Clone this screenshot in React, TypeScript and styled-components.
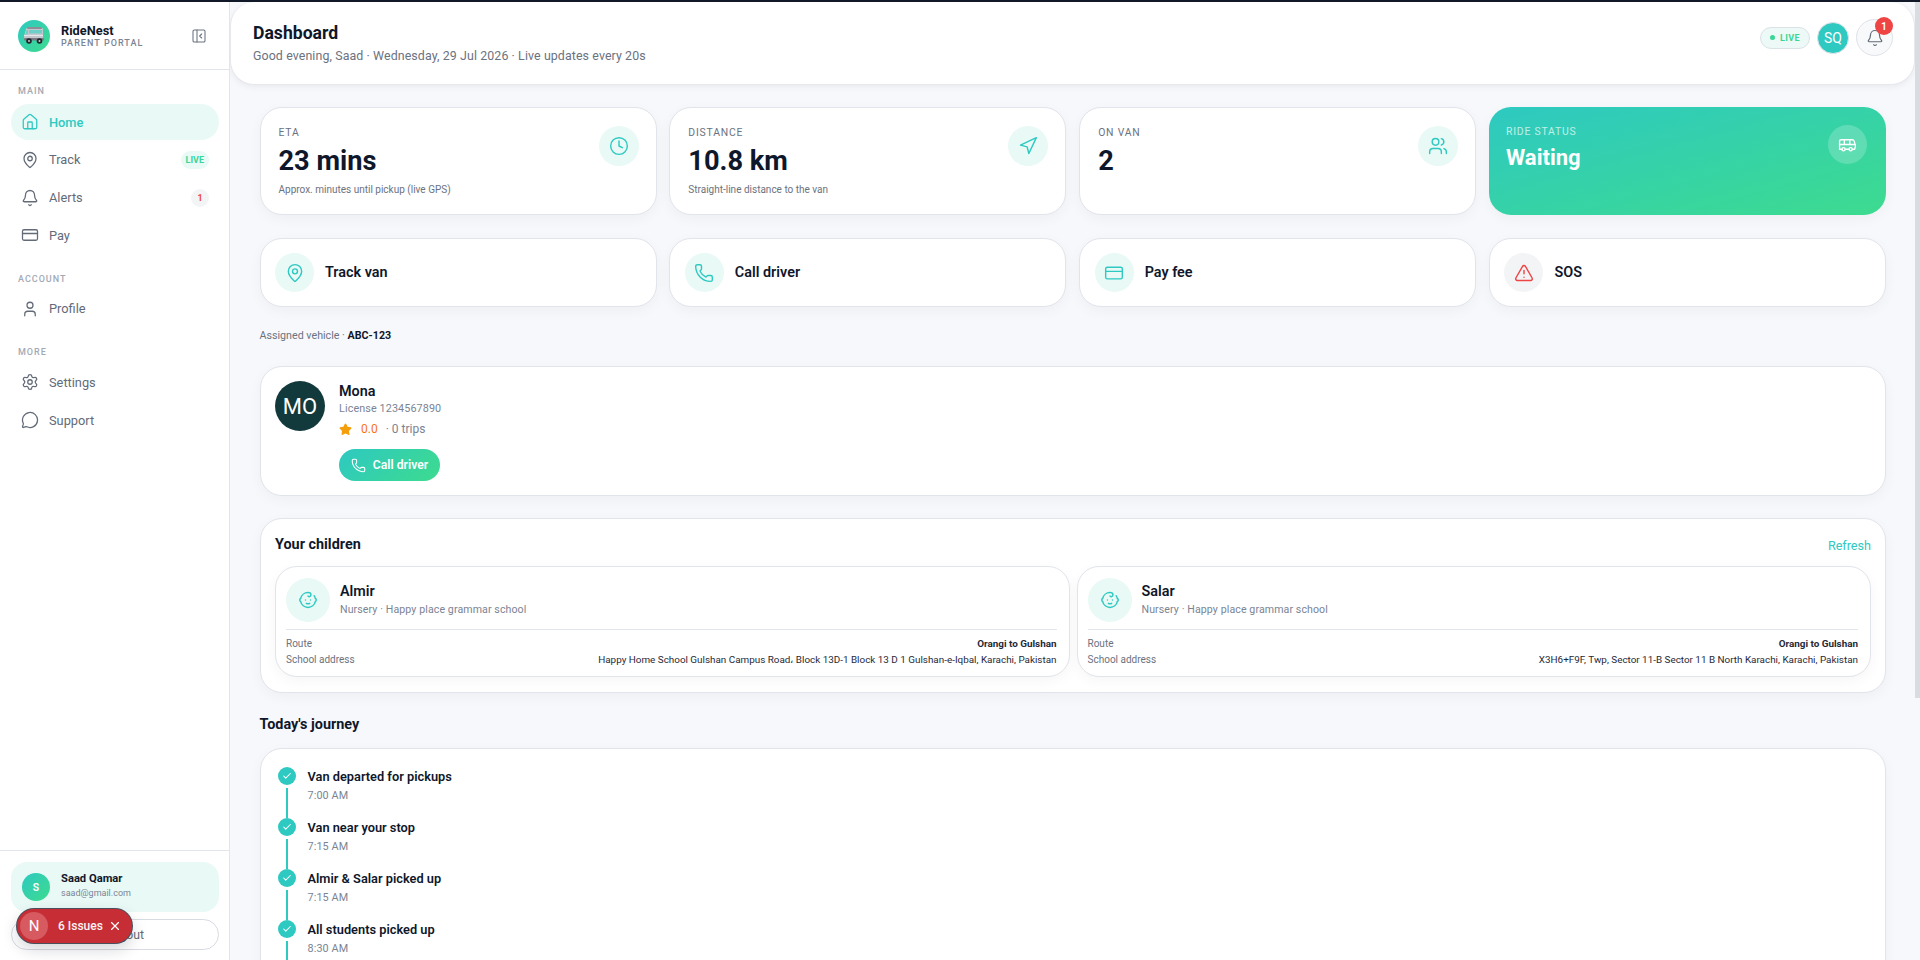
import React from 'react';
import styled, { createGlobalStyle } from 'styled-components';
import {
  House, MapPin, Bell, CreditCard, User, Settings, MessageCircle, PanelLeftClose,
  Clock, Navigation, Users, Bus, Phone, TriangleAlert, Baby, Check, Star, X, LogOut,
} from 'lucide-react';

const GlobalStyle = createGlobalStyle`
  html, body { margin: 0; padding: 0; height: 100%; overflow: hidden; }
  body { font-family: Roboto, "Liberation Sans", sans-serif; color: #0f172a; background: #f7f8fb; }
  * { box-sizing: border-box; }
`;

const teal = '#2ec9c1';
const gradient = 'linear-gradient(135deg, #2ec9c1 0%, #3ddb8f 100%)';

const Page = styled.div`
  height: 960px;
  display: flex;
  flex-direction: column;
  overflow: hidden;
  position: relative;
`;
const TopLine = styled.div`
  height: 2px;
  flex: none;
  background: #111827;
`;
const Body = styled.div`
  flex: 1;
  min-height: 0;
  display: flex;
`;

/* sidebar */
const Sidebar = styled.aside`
  width: 230px;
  flex: none;
  background: #fff;
  border-right: 1px solid #e2e5ea;
  display: flex;
  flex-direction: column;
`;
const Brand = styled.div`
  height: 68px;
  flex: none;
  display: flex;
  align-items: center;
  padding: 0 22px 0 18px;
  border-bottom: 1px solid #e2e5ea;
`;
const LogoCircle = styled.div`
  width: 32px;
  height: 32px;
  border-radius: 50%;
  background: ${gradient};
  display: flex;
  align-items: center;
  justify-content: center;
  flex: none;
`;
const BrandText = styled.div`
  margin-left: 11px;
  flex: 1;
`;
const BrandName = styled.div`
  font-size: 12.8px;
  line-height: 15px;
  font-weight: 700;
  color: #0f172a;
`;
const BrandSub = styled.div`
  font-size: 9px;
  line-height: 11px;
  font-weight: 500;
  letter-spacing: 1.05px;
  color: #7b8494;
`;
const Toggle = styled.div`
  color: #6b7280;
  display: flex;
`;
const Nav = styled.nav`
  flex: 1;
  padding: 15px 10px 0 11px;
`;
const NavLabel = styled.div`
  font-size: 9px;
  line-height: 12px;
  font-weight: 500;
  letter-spacing: 1px;
  color: #a3a9b4;
  padding-left: 7px;
  margin-bottom: 7px;
  &:not(:first-child) { margin: 19.5px 0 6px; }
`;
const NavItem = styled.div<{ $active?: boolean }>`
  height: 36px;
  margin-bottom: 1.8px;
  border-radius: 18px;
  display: flex;
  align-items: center;
  padding: 0 10px;
  gap: 10px;
  font-size: 12.8px;
  font-weight: ${(p) => (p.$active ? 500 : 400)};
  color: ${(p) => (p.$active ? teal : '#636b78')};
  background: ${(p) => (p.$active ? '#e9f9f6' : 'transparent')};
`;
const NavText = styled.span`
  flex: 1;
`;
const LiveTag = styled.span`
  font-size: 9px;
  line-height: 18px;
  font-weight: 700;
  color: #3ad695;
  background: #e9f9f6;
  border-radius: 9px;
  padding: 0 5px;
`;
const CountTag = styled.span`
  width: 18px;
  height: 18px;
  border-radius: 50%;
  background: #f3f4f6;
  color: #ef4444;
  font-size: 9px;
  font-weight: 700;
  display: flex;
  align-items: center;
  justify-content: center;
`;
const SideFooter = styled.div`
  flex: none;
  height: 110px;
  border-top: 1px solid #e2e5ea;
  padding: 11px 10px 0 11px;
`;
const UserCard = styled.div`
  height: 50px;
  border-radius: 16px;
  background: #e9f9f6;
  display: flex;
  align-items: center;
  padding: 0 11px;
  gap: 11px;
`;
const UserAvatar = styled.div`
  width: 28px;
  height: 28px;
  border-radius: 50%;
  background: ${gradient};
  color: #fff;
  font-size: 10.4px;
  font-weight: 600;
  display: flex;
  align-items: center;
  justify-content: center;
`;
const UserName = styled.div`
  font-size: 11.2px;
  line-height: 14px;
  font-weight: 700;
  margin-top: -2px;
`;
const UserMail = styled.div`
  font-size: 9px;
  line-height: 15px;
  color: #7b8494;
`;
const LogoutButton = styled.div`
  height: 31px;
  margin-top: 7px;
  border: 1px solid #d8dbe1;
  border-radius: 16px;
  background: #fff;
  display: flex;
  align-items: center;
  justify-content: center;
  gap: 6px;
  font-size: 12.2px;
  color: #636b78;
`;
const IssuesBadge = styled.div`
  position: absolute;
  left: 17px;
  top: 909px;
  width: 115px;
  height: 34px;
  border-radius: 17px;
  background: #c62d34;
  box-shadow: 0 0 0 1px #4a4f5c, 0 6px 16px rgba(15, 23, 42, 0.18);
  display: flex;
  align-items: center;
  color: #fff;
  padding-left: 3px;
  font-size: 12px;
  font-weight: 500;
`;
const IssuesLogo = styled.div`
  width: 28px;
  height: 28px;
  border-radius: 50%;
  background: #d65a60;
  display: flex;
  align-items: center;
  justify-content: center;
  font-size: 15px;
  font-weight: 400;
  margin-right: 10px;
`;
const IssuesText = styled.span`
  margin-right: 5px;
  opacity: 0.95;
`;

/* main column */
const Main = styled.main`
  flex: 1;
  min-width: 0;
  overflow: hidden;
`;
const Header = styled.header`
  height: 83px;
  background: #fff;
  border-radius: 24px;
  border: 1px solid #e6e8ed;
  border-top: none;
  box-shadow: 0 2px 6px rgba(15, 23, 42, 0.06);
  display: flex;
  align-items: center;
  justify-content: space-between;
  padding: 0 21px 2px 22px;
`;
const PageTitle = styled.h1`
  margin: 0;
  font-size: 17.6px;
  line-height: 24px;
  font-weight: 700;
`;
const PageSub = styled.p`
  margin: 3px 0 0;
  font-size: 12.4px;
  line-height: 16px;
  color: #6b7280;
  letter-spacing: 0.1px;
`;
const HeaderActions = styled.div`
  display: flex;
  align-items: center;
  gap: 7px;
  margin-bottom: 9px;
`;
const LivePill = styled.div`
  width: 50px;
  height: 22px;
  border-radius: 11px;
  border: 1px solid #dbe2e6;
  background: #ecf9f6;
  color: #3ad695;
  font-size: 9px;
  font-weight: 700;
  letter-spacing: 0.4px;
  display: flex;
  align-items: center;
  justify-content: center;
  gap: 5px;
`;
const LiveDot = styled.span`
  width: 5px;
  height: 5px;
  border-radius: 50%;
  background: #3ad695;
`;
const HeaderAvatar = styled.div`
  width: 32px;
  height: 32px;
  border-radius: 50%;
  background: ${teal};
  border: 1px solid #dfe3e8;
  color: #fff;
  font-size: 14px;
  font-weight: 400;
  display: flex;
  align-items: center;
  justify-content: center;
`;
const BellButton = styled.div`
  width: 37px;
  height: 37px;
  border-radius: 50%;
  border: 1px solid #dfe2e7;
  background: #f8f9fb;
  color: #636b78;
  display: flex;
  align-items: center;
  justify-content: center;
  position: relative;
`;
const BellBadge = styled.span`
  position: absolute;
  top: -3px;
  right: -1px;
  width: 18px;
  height: 18px;
  border-radius: 50%;
  background: #ef4444;
  color: #fff;
  font-size: 10.4px;
  font-weight: 600;
  display: flex;
  align-items: center;
  justify-content: center;
`;
const Content = styled.div`
  padding: 22px 29px 0 29.5px;
  display: flex;
  flex-direction: column;
`;
const FourGrid = styled.div`
  display: grid;
  grid-template-columns: repeat(4, 1fr);
  gap: 12.8px;
`;
const Card = styled.div`
  background: #fff;
  border: 1px solid #e1e4ea;
  border-radius: 22px;
  box-shadow: 0 4px 14px rgba(15, 23, 42, 0.04);
`;
const StatCard = styled(Card)<{ $accent?: boolean }>`
  height: 108px;
  padding: 18px 17px 17px 18px;
  display: flex;
  justify-content: space-between;
  ${(p) => p.$accent && `
    padding: 18px 19px 17px 17px;
    background: linear-gradient(to bottom right, #2ec9c1, #3ddb8f);
    border: none;
    color: #fff;
  `}
`;
const StatLabel = styled.div<{ $accent?: boolean }>`
  font-size: 10.4px;
  line-height: 14px;
  letter-spacing: 0.8px;
  color: ${(p) => (p.$accent ? 'rgba(255,255,255,.7)' : '#6b7280')};
`;
const StatValue = styled.div<{ $small?: boolean }>`
  font-size: ${(p) => (p.$small ? '22px' : '27.2px')};
  line-height: ${(p) => (p.$small ? '28px' : '32px')};
  font-weight: 700;
  margin-top: 5px;
`;
const StatNote = styled.div`
  font-size: 10px;
  line-height: 14px;
  color: #6b7280;
  margin-top: 6px;
`;
const IconCircle = styled.div<{ $size: number; $tone?: 'teal' | 'red' | 'glass' }>`
  width: ${(p) => p.$size}px;
  height: ${(p) => p.$size}px;
  flex: none;
  border-radius: 50%;
  display: flex;
  align-items: center;
  justify-content: center;
  color: ${(p) => (p.$tone === 'red' ? '#ef4444' : p.$tone === 'glass' ? '#fff' : teal)};
  background: ${(p) =>
    p.$tone === 'red' ? '#f3f4f6' : p.$tone === 'glass' ? 'rgba(255,255,255,.2)' : '#e9f9f6'};
`;
const ActionsRow = styled(FourGrid)`
  margin-top: 23px;
`;
const ActionCard = styled(Card)`
  height: 69px;
  display: flex;
  align-items: center;
  gap: 11px;
  padding: 0 14.5px;
  font-size: 14.4px;
  font-weight: 600;
`;
const VehicleLine = styled.div`
  margin-top: 21px;
  font-size: 10.7px;
  line-height: 16px;
  color: #6b7280;
  & b { color: #0f172a; font-weight: 700; }
`;
const DriverCard = styled(Card)`
  margin-top: 22px;
  height: 130px;
  padding: 14px 14.5px;
  display: flex;
  gap: 14px;
`;
const DriverAvatar = styled.div`
  width: 50px;
  height: 50px;
  border-radius: 50%;
  background: #12393b;
  color: #fff;
  font-size: 22px;
  display: flex;
  align-items: center;
  justify-content: center;
`;
const DriverBody = styled.div`
  padding-top: 1px;
`;
const DriverName = styled.div`
  font-size: 14.4px;
  line-height: 20px;
  font-weight: 600;
`;
const DriverMeta = styled.div`
  font-size: 10.8px;
  line-height: 14px;
  color: #7b8494;
  letter-spacing: 0.1px;
`;
const RatingRow = styled.div`
  display: flex;
  align-items: center;
  margin-top: 5px;
  height: 16px;
  font-size: 12px;
  color: #7b8494;
`;
const RatingValue = styled.span`
  color: #f97316;
  margin: 0 8px 0 9px;
`;
const CallButton = styled.div`
  margin-top: 12px;
  width: 101px;
  height: 32px;
  border-radius: 16px;
  background: ${gradient};
  color: #fff;
  font-size: 12.2px;
  font-weight: 600;
  display: flex;
  align-items: center;
  justify-content: center;
  gap: 7px;
`;
const ChildrenCard = styled(Card)`
  margin-top: 22px;
  height: 175px;
  padding: 15px 14px 15px 14.5px;
`;
const SectionHead = styled.div`
  display: flex;
  align-items: center;
  justify-content: space-between;
  height: 20px;
  margin-bottom: 12px;
`;
const SectionTitle = styled.div`
  font-size: 14.4px;
  line-height: 20px;
  font-weight: 700;
  margin-top: 1px;
`;
const RefreshLink = styled.span`
  font-size: 12.6px;
  font-weight: 400;
  color: ${teal};
  margin-top: 2px;
`;
const ChildGrid = styled.div`
  display: grid;
  grid-template-columns: 1fr 1fr;
  gap: 7px;
`;
const ChildCard = styled(Card)`
  height: 111px;
  padding: 9px 12px 0 10px;
`;
const ChildTop = styled.div`
  display: flex;
  align-items: center;
  gap: 10px;
  height: 54px;
  padding-bottom: 5px;
  border-bottom: 1px solid #e2e5ea;
`;
const ChildName = styled.div`
  font-size: 14.4px;
  line-height: 18px;
  font-weight: 600;
`;
const ChildSub = styled.div`
  font-size: 10.6px;
  line-height: 14px;
  color: #7b8494;
  letter-spacing: 0.1px;
  margin-top: 2px;
`;
const InfoList = styled.div`
  padding-top: 5px;
`;
const InfoRow = styled.div`
  display: flex;
  justify-content: space-between;
  height: 16.5px;
  align-items: center;
  font-size: 10px;
  color: #6b7280;
`;
const InfoValue = styled.span<{ $bold?: boolean }>`
  font-size: 9.9px;
  color: #1f2937;
  font-weight: ${(p) => (p.$bold ? 700 : 400)};
`;
const JourneyTitle = styled.div`
  margin-top: 22px;
  font-size: 14.4px;
  line-height: 20px;
  font-weight: 700;
`;
const JourneyCard = styled(Card)`
  margin-top: 13px;
  padding: 18px 17px 0 17.5px;
  height: 260px;
`;
const Step = styled.div`
  display: flex;
  gap: 11.5px;
  height: 51px;
`;
const StepRail = styled.div`
  width: 18px;
  flex: none;
  display: flex;
  flex-direction: column;
  align-items: center;
`;
const StepDot = styled.div`
  width: 18px;
  height: 18px;
  flex: none;
  border-radius: 50%;
  background: ${teal};
  color: #fff;
  display: flex;
  align-items: center;
  justify-content: center;
`;
const StepLine = styled.div`
  width: 2px;
  flex: 1;
  margin-top: 3px;
  background: ${teal};
`;
const StepBody = styled.div`
  padding-top: 1px;
`;
const StepTitle = styled.div`
  font-size: 12.8px;
  line-height: 18px;
  font-weight: 600;
`;
const StepTime = styled.div`
  font-size: 10.8px;
  line-height: 14px;
  color: #7b8494;
  margin-top: 3px;
  letter-spacing: 0.1px;
`;
const ScrollTrack = styled.div`
  width: 5px;
  flex: none;
  background: #f7f8fb;
`;
const ScrollThumb = styled.div`
  height: 696px;
  background: #d9dce1;
`;

const VanLogo = () => (
  <svg width="24" height="19" viewBox="0 0 24 19">
    <path d="M5 2h15a1 1 0 0 1 1 1v11H2v-4l2-7a1 1 0 0 1 1-1z" fill="#c4c7cd" />
    <rect x="5" y="1" width="15" height="2" rx="1" fill="#8b8f97" />
    <rect x="7" y="4" width="13" height="3.5" fill="#6ccfca" />
    <path d="M3.4 8.4 4.6 4H6v4.4z" fill="#6ccfca" />
    <rect x="2" y="9" width="19" height="1" fill="#e6e7ea" />
    <rect x="2" y="12" width="20" height="2.6" rx="1" fill="#777b84" />
    <circle cx="7" cy="15" r="2.8" fill="#23262c" />
    <circle cx="17.5" cy="15" r="2.8" fill="#23262c" />
    <circle cx="7" cy="15" r="1" fill="#c4c7cd" />
    <circle cx="17.5" cy="15" r="1" fill="#c4c7cd" />
  </svg>
);

const stats = [
  { label: 'ETA', value: '23 mins', note: 'Approx. minutes until pickup (live GPS)', icon: Clock },
  { label: 'DISTANCE', value: '10.8 km', note: 'Straight-line distance to the van', icon: Navigation },
  { label: 'ON VAN', value: '2', note: '', icon: Users },
];

const children = [
  { name: 'Almir', address: 'Happy Home School Gulshan Campus Road، Block 13D-1 Block 13 D 1 Gulshan-e-Iqbal, Karachi, Pakistan' },
  { name: 'Salar', address: 'X3H6+F9F, Twp, Sector 11-B Sector 11 B North Karachi, Karachi, Pakistan' },
];

const steps = [
  { title: 'Van departed for pickups', time: '7:00 AM' },
  { title: 'Van near your stop', time: '7:15 AM' },
  { title: 'Almir & Salar picked up', time: '7:15 AM' },
  { title: 'All students picked up', time: '8:30 AM' },
];

export default function App() {
  return (
    <Page>
      <GlobalStyle />
      <TopLine />
      <Body>
        <Sidebar>
          <Brand>
            <LogoCircle><VanLogo /></LogoCircle>
            <BrandText>
              <BrandName>RideNest</BrandName>
              <BrandSub>PARENT PORTAL</BrandSub>
            </BrandText>
            <Toggle><PanelLeftClose size={16} strokeWidth={1.6} /></Toggle>
          </Brand>
          <Nav>
            <NavLabel>MAIN</NavLabel>
            <NavItem $active><House size={18} strokeWidth={1.7} /><NavText>Home</NavText></NavItem>
            <NavItem><MapPin size={18} strokeWidth={1.7} /><NavText>Track</NavText><LiveTag>LIVE</LiveTag></NavItem>
            <NavItem><Bell size={18} strokeWidth={1.7} /><NavText>Alerts</NavText><CountTag>1</CountTag></NavItem>
            <NavItem><CreditCard size={18} strokeWidth={1.7} /><NavText>Pay</NavText></NavItem>
            <NavLabel>ACCOUNT</NavLabel>
            <NavItem><User size={18} strokeWidth={1.7} /><NavText>Profile</NavText></NavItem>
            <NavLabel>MORE</NavLabel>
            <NavItem><Settings size={18} strokeWidth={1.7} /><NavText>Settings</NavText></NavItem>
            <NavItem><MessageCircle size={18} strokeWidth={1.7} /><NavText>Support</NavText></NavItem>
          </Nav>
          <SideFooter>
            <UserCard>
              <UserAvatar>S</UserAvatar>
              <div>
                <UserName>Saad Qamar</UserName>
                <UserMail>saad@gmail.com</UserMail>
              </div>
            </UserCard>
            <LogoutButton><LogOut size={14} strokeWidth={1.6} />Logout</LogoutButton>
          </SideFooter>
        </Sidebar>
        <Main>
          <Header>
            <div>
              <PageTitle>Dashboard</PageTitle>
              <PageSub>Good evening, Saad · Wednesday, 29 Jul 2026 · Live updates every 20s</PageSub>
            </div>
            <HeaderActions>
              <LivePill><LiveDot />LIVE</LivePill>
              <HeaderAvatar>SQ</HeaderAvatar>
              <BellButton>
                <Bell size={18} strokeWidth={1.6} />
                <BellBadge>1</BellBadge>
              </BellButton>
            </HeaderActions>
          </Header>
          <Content>
            <FourGrid>
              {stats.map((s) => (
                <StatCard key={s.label}>
                  <div>
                    <StatLabel>{s.label}</StatLabel>
                    <StatValue>{s.value}</StatValue>
                    {s.note && <StatNote>{s.note}</StatNote>}
                  </div>
                  <IconCircle $size={40}><s.icon size={20} strokeWidth={1.7} /></IconCircle>
                </StatCard>
              ))}
              <StatCard $accent>
                <div>
                  <StatLabel $accent>RIDE STATUS</StatLabel>
                  <StatValue $small>Waiting</StatValue>
                </div>
                <IconCircle $size={39} $tone="glass"><Bus size={19} strokeWidth={1.7} /></IconCircle>
              </StatCard>
            </FourGrid>
            <ActionsRow>
              <ActionCard><IconCircle $size={39}><MapPin size={20} strokeWidth={1.7} /></IconCircle>Track van</ActionCard>
              <ActionCard><IconCircle $size={39}><Phone size={20} strokeWidth={1.7} /></IconCircle>Call driver</ActionCard>
              <ActionCard><IconCircle $size={39}><CreditCard size={20} strokeWidth={1.7} /></IconCircle>Pay fee</ActionCard>
              <ActionCard><IconCircle $size={39} $tone="red"><TriangleAlert size={20} strokeWidth={1.7} /></IconCircle>SOS</ActionCard>
            </ActionsRow>
            <VehicleLine>Assigned vehicle · <b>ABC-123</b></VehicleLine>
            <DriverCard>
              <DriverAvatar>MO</DriverAvatar>
              <DriverBody>
                <DriverName>Mona</DriverName>
                <DriverMeta>License 1234567890</DriverMeta>
                <RatingRow>
                  <Star size={13} fill="#f59e0b" color="#f59e0b" />
                  <RatingValue>0.0</RatingValue>
                  · 0 trips
                </RatingRow>
                <CallButton><Phone size={15} strokeWidth={1.7} />Call driver</CallButton>
              </DriverBody>
            </DriverCard>
            <ChildrenCard>
              <SectionHead>
                <SectionTitle>Your children</SectionTitle>
                <RefreshLink>Refresh</RefreshLink>
              </SectionHead>
              <ChildGrid>
                {children.map((c) => (
                  <ChildCard key={c.name}>
                    <ChildTop>
                      <IconCircle $size={44}><Baby size={20} strokeWidth={1.7} /></IconCircle>
                      <div>
                        <ChildName>{c.name}</ChildName>
                        <ChildSub>Nursery · Happy place grammar school</ChildSub>
                      </div>
                    </ChildTop>
                    <InfoList>
                      <InfoRow><span>Route</span><InfoValue $bold>Orangi to Gulshan</InfoValue></InfoRow>
                      <InfoRow><span>School address</span><InfoValue>{c.address}</InfoValue></InfoRow>
                    </InfoList>
                  </ChildCard>
                ))}
              </ChildGrid>
            </ChildrenCard>
            <JourneyTitle>Today's journey</JourneyTitle>
            <JourneyCard>
              {steps.map((s) => (
                <Step key={s.title}>
                  <StepRail>
                    <StepDot><Check size={10} strokeWidth={2.5} /></StepDot>
                    <StepLine />
                  </StepRail>
                  <StepBody>
                    <StepTitle>{s.title}</StepTitle>
                    <StepTime>{s.time}</StepTime>
                  </StepBody>
                </Step>
              ))}
            </JourneyCard>
          </Content>
        </Main>
        <ScrollTrack><ScrollThumb /></ScrollTrack>
      </Body>
      <IssuesBadge>
        <IssuesLogo>N</IssuesLogo>
        <IssuesText>6 Issues</IssuesText>
        <X size={14} strokeWidth={2} />
      </IssuesBadge>
    </Page>
  );
}
